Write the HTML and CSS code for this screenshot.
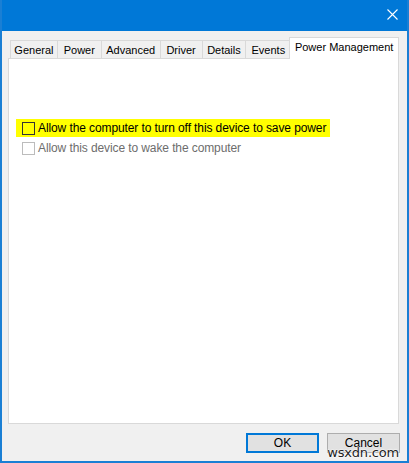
FILE: index.html
```html
<!DOCTYPE html>
<html>
<head>
<meta charset="utf-8">
<link rel="stylesheet" href="styles.css">
</head>
<body>
<div class="window">
  <div class="titlebar">
    <svg class="close" width="11" height="11" viewBox="0 0 11 11"><path d="M0.5 0.5 L10.5 10.5 M10.5 0.5 L0.5 10.5" stroke="#fff" stroke-width="1.1" fill="none"/></svg>
  </div>
  <div class="body">
    <div class="tabs">
      <div class="tab t-general">General</div>
      <div class="tab t-power">Power</div>
      <div class="tab t-adv">Advanced</div>
      <div class="tab t-driver">Driver</div>
      <div class="tab t-details">Details</div>
      <div class="tab t-events">Events</div>
      <div class="tab active">Power Management</div>
    </div>
    <div class="panel">
      <label class="row highlight"><span class="box"></span><span class="label">Allow the computer to turn off this device to save power</span></label>
      <label class="row disabled"><span class="box"></span><span class="label">Allow this device to wake the computer</span></label>
    </div>
    <div class="buttons">
      <div class="btn default">OK</div>
      <div class="btn">Cancel</div>
    </div>
  </div>
  <div class="watermark">wsxdn.com</div>
</div>
</body>
</html>
```
FILE: styles.css
```css
html, body {
  margin: 0;
  padding: 0;
  background: #f0f0f0;
}
.window {
  position: relative;
  width: 409px;
  height: 463px;
  box-sizing: border-box;
  border-left: 2px solid #1a7fd4;
  border-right: 2px solid #1a7fd4;
  border-bottom: 2px solid #1a7fd4;
  background: #f0f0f0;
  display: flex;
  flex-direction: column;
  font-family: "Liberation Sans", Arial, sans-serif;
  font-size: 12px;
  color: #000;
  overflow: hidden;
}
.titlebar {
  height: 31px;
  background: #0078d7;
  margin: 0 -2px;
  display: flex;
  justify-content: flex-end;
  align-items: flex-start;
  flex: none;
}
.close {
  margin-top: 9px;
  margin-right: 11px;
}
.body {
  flex: 1;
  display: flex;
  flex-direction: column;
  padding: 9px 8px 0 6px;
}
.tabs {
  display: flex;
  height: 18px;
  padding-left: 2px;
  align-items: flex-end;
  position: relative;
  z-index: 1;
}
.tab {
  height: 18px;
  box-sizing: border-box;
  border: 1px solid #d9d9d9;
  border-bottom: none;
  margin-left: -1px;
  background: #f0f0f0;
  display: flex;
  align-items: center;
  justify-content: center;
  white-space: nowrap;
  color: #000;
  font-size: 11px;
  padding-top: 1px;
}
.tab:first-child { margin-left: 0; }
.t-general { width: 48px; }
.t-power { width: 45px; }
.t-adv { width: 60px; }
.t-driver { width: 43px; }
.t-details { width: 45px; }
.t-events { width: 46px; }
.tab.active {
  background: #fff;
  height: 22px;
  width: 110px;
  margin-left: -2px;
  margin-bottom: -1px;
  padding-top: 0;
  padding-bottom: 4px;
  border-color: #d9d9d9;
}
.panel {
  height: 366px;
  box-sizing: border-box;
  background: #fff;
  border: 1px solid #d9d9d9;
  padding: 60px 0 0 7px;
  display: flex;
  flex-direction: column;
  align-items: flex-start;
  flex: none;
}
.row {
  display: flex;
  align-items: center;
  height: 18px;
  padding: 0 4px 0 6px;
}
.highlight {
  background: #ffff00;
}
.disabled {
  margin-top: 2px;
  color: #6d6d6d;
}
.box {
  width: 13px;
  height: 13px;
  box-sizing: border-box;
  border: 1px solid #333;
  background: transparent;
  margin-right: 3px;
  flex: none;
}
.disabled .box {
  border-color: #bcbcbc;
  background: #fff;
}
.label {
  white-space: nowrap;
  letter-spacing: -0.1px;
}
.buttons {
  display: flex;
  justify-content: flex-end;
  gap: 8px;
  margin-top: 9px;
  margin-right: -1px;
}
.btn {
  width: 73px;
  height: 20px;
  box-sizing: border-box;
  background: #e1e1e1;
  border: 1px solid #adadad;
  display: flex;
  align-items: center;
  justify-content: center;
  font-size: 12px;
}
.btn.default {
  border: 2px solid #0078d7;
}
.watermark {
  position: absolute;
  right: 8px;
  bottom: 1px;
  font-family: "DejaVu Sans", sans-serif;
  font-size: 13px;
  color: #222;
  text-shadow: 0 0 2px #fff, 0 0 2px #fff, 0 0 1px #fff;
  letter-spacing: -0.2px;
}
```
